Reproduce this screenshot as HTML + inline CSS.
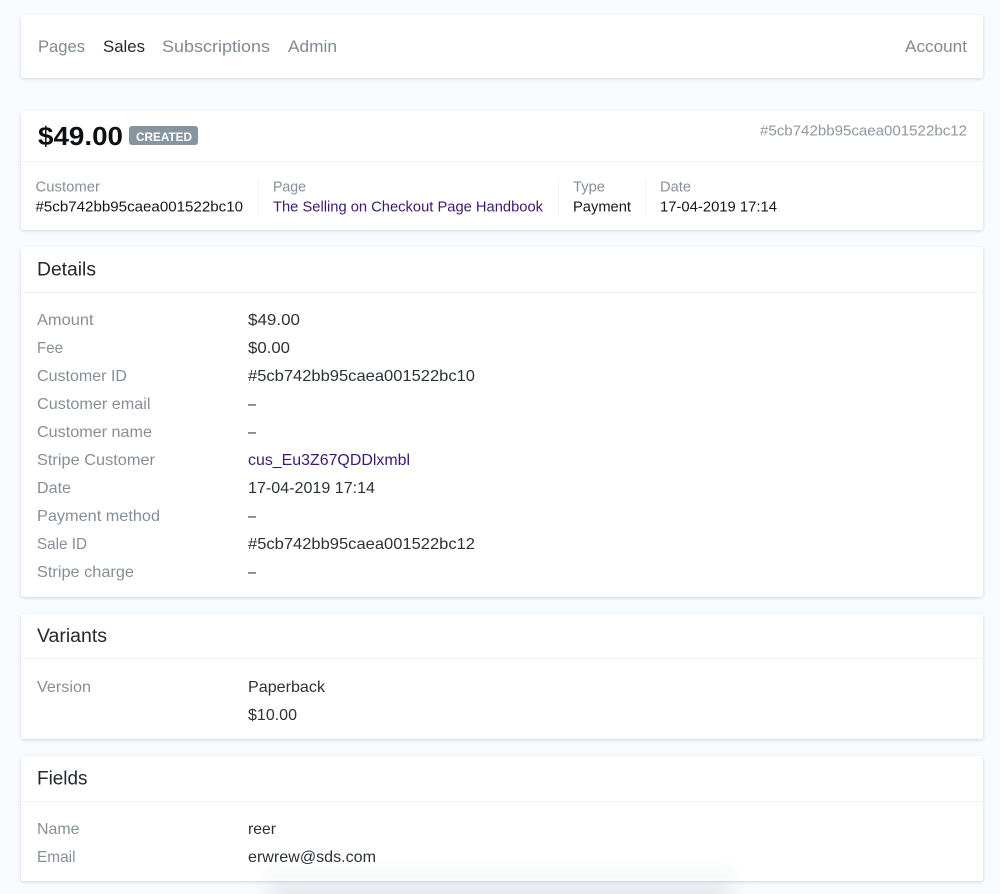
<!DOCTYPE html>
<html lang="en">
<head>
<meta charset="utf-8">
<title>Sale</title>
<style>
html,body{margin:0;padding:0;background:#f8fbfe;width:1000px;height:894px;overflow:hidden;}
#wrap{width:1000px;height:894px;position:relative;overflow:hidden;font-family:"Liberation Sans",sans-serif;}
.card{position:absolute;left:21px;width:962px;background:#fff;border-radius:3px;box-shadow:0 1px 3px rgba(40,60,80,.2);}
.hr{position:absolute;left:21px;width:962px;height:1px;background:#f1f3f5;}
.vr{position:absolute;top:178px;width:1px;height:38px;background:#f2f4f6;}
.badge{position:absolute;left:129px;top:126px;width:69px;height:19px;border-radius:3px;background:#8795a1;}
.glow{position:absolute;left:270px;top:880px;width:460px;height:40px;background:#e4e9ed;filter:blur(10px);}
.fade{position:absolute;left:265px;top:860px;width:470px;height:21px;background:linear-gradient(rgba(238,241,244,0),rgba(238,241,244,.6));filter:blur(4px);}
.clip{position:absolute;left:21px;top:756px;width:962px;height:125px;overflow:hidden;border-radius:3px;}
svg{position:absolute;left:0;top:0;}
text{font-family:"Liberation Sans",sans-serif;font-size:16px;}
.nav{font-size:17px;fill:#7f8a94;}
.l{fill:#868f98;}
.v{fill:#2b3238;}
.a{fill:#3d1a70;}
.t{font-size:19px;fill:#22292f;}
.s{font-size:14.5px;}
</style>
</head>
<body>
<div id="wrap">
<div class="glow"></div>
<div class="card" style="top:15px;height:63px"></div>
<div class="card" style="top:111px;height:119px"></div>
<div class="card" style="top:247px;height:350px"></div>
<div class="card" style="top:614px;height:125px"></div>
<div class="card" style="top:756px;height:125px"></div>
<div class="clip"><div class="fade" style="left:244px;top:104px"></div></div>
<div class="hr" style="top:161px"></div>
<div class="hr" style="top:292px"></div>
<div class="hr" style="top:658px"></div>
<div class="hr" style="top:801px"></div>
<div class="vr" style="left:258px"></div>
<div class="vr" style="left:558px"></div>
<div class="vr" style="left:645px"></div>
<div class="badge"></div>
<svg width="1000" height="894" viewBox="0 0 1000 894" xmlns="http://www.w3.org/2000/svg">
<text class="nav" x="38" y="52" textLength="47" lengthAdjust="spacingAndGlyphs">Pages</text>
<text class="nav" x="103" y="52" textLength="42" lengthAdjust="spacingAndGlyphs" style="fill:#22292f">Sales</text>
<text class="nav" x="162" y="52" textLength="108" lengthAdjust="spacingAndGlyphs">Subscriptions</text>
<text class="nav" x="288" y="52" textLength="49" lengthAdjust="spacingAndGlyphs">Admin</text>
<text class="nav" x="905" y="52" textLength="62" lengthAdjust="spacingAndGlyphs">Account</text>

<text x="38" y="145" textLength="85" lengthAdjust="spacingAndGlyphs" style="font-size:26px;font-weight:bold;fill:#0d1013">$49.00</text>
<text x="136" y="141" textLength="56" lengthAdjust="spacingAndGlyphs" style="font-size:12px;font-weight:bold;fill:#fff">CREATED</text>
<text x="760" y="135.5" textLength="207" lengthAdjust="spacingAndGlyphs" style="font-size:15px;fill:#8f98a1">#5cb742bb95caea001522bc12</text>

<text class="s l" x="35.5" y="191.5" textLength="64.5" lengthAdjust="spacingAndGlyphs">Customer</text>
<text class="s" x="35.5" y="211.5" textLength="207.5" lengthAdjust="spacingAndGlyphs" style="fill:#14181c">#5cb742bb95caea001522bc10</text>
<text class="s l" x="273" y="191.5" textLength="33" lengthAdjust="spacingAndGlyphs">Page</text>
<text class="s a" x="273" y="211.5" textLength="270" lengthAdjust="spacingAndGlyphs">The Selling on Checkout Page Handbook</text>
<text class="s l" x="573" y="191.5" textLength="32" lengthAdjust="spacingAndGlyphs">Type</text>
<text class="s" x="573" y="211.5" textLength="58" lengthAdjust="spacingAndGlyphs" style="fill:#14181c">Payment</text>
<text class="s l" x="660" y="191.5" textLength="31" lengthAdjust="spacingAndGlyphs">Date</text>
<text class="s" x="660" y="211.5" textLength="117" lengthAdjust="spacingAndGlyphs" style="fill:#14181c">17-04-2019 17:14</text>

<text class="t" x="37" y="275.5" textLength="59" lengthAdjust="spacingAndGlyphs">Details</text>
<text class="l" x="37" y="325" textLength="56.5" lengthAdjust="spacingAndGlyphs">Amount</text>
<text class="v" x="248" y="325" textLength="52" lengthAdjust="spacingAndGlyphs">$49.00</text>
<text class="l" x="37" y="353" textLength="26" lengthAdjust="spacingAndGlyphs">Fee</text>
<text class="v" x="248" y="353" textLength="42" lengthAdjust="spacingAndGlyphs">$0.00</text>
<text class="l" x="37" y="381" textLength="90" lengthAdjust="spacingAndGlyphs">Customer ID</text>
<text class="v" x="248" y="381" textLength="227" lengthAdjust="spacingAndGlyphs">#5cb742bb95caea001522bc10</text>
<text class="l" x="37" y="409" textLength="113.5" lengthAdjust="spacingAndGlyphs">Customer email</text>
<text class="v" x="248" y="409" textLength="8" lengthAdjust="spacingAndGlyphs">–</text>
<text class="l" x="37" y="437" textLength="115" lengthAdjust="spacingAndGlyphs">Customer name</text>
<text class="v" x="248" y="437" textLength="8" lengthAdjust="spacingAndGlyphs">–</text>
<text class="l" x="37" y="465" textLength="118" lengthAdjust="spacingAndGlyphs">Stripe Customer</text>
<text class="a" x="248" y="465" textLength="162" lengthAdjust="spacingAndGlyphs">cus_Eu3Z67QDDlxmbl</text>
<text class="l" x="37" y="493" textLength="34" lengthAdjust="spacingAndGlyphs">Date</text>
<text class="v" x="248" y="493" textLength="127" lengthAdjust="spacingAndGlyphs">17-04-2019 17:14</text>
<text class="l" x="37" y="521" textLength="123" lengthAdjust="spacingAndGlyphs">Payment method</text>
<text class="v" x="248" y="521" textLength="8" lengthAdjust="spacingAndGlyphs">–</text>
<text class="l" x="37" y="549" textLength="50" lengthAdjust="spacingAndGlyphs">Sale ID</text>
<text class="v" x="248" y="549" textLength="227" lengthAdjust="spacingAndGlyphs">#5cb742bb95caea001522bc12</text>
<text class="l" x="37" y="577" textLength="97" lengthAdjust="spacingAndGlyphs">Stripe charge</text>
<text class="v" x="248" y="577" textLength="8" lengthAdjust="spacingAndGlyphs">–</text>

<text class="t" x="37" y="642" textLength="70" lengthAdjust="spacingAndGlyphs">Variants</text>
<text class="l" x="37" y="692" textLength="54" lengthAdjust="spacingAndGlyphs">Version</text>
<text class="v" x="248" y="692" textLength="77" lengthAdjust="spacingAndGlyphs">Paperback</text>
<text class="v" x="248" y="720" textLength="49" lengthAdjust="spacingAndGlyphs">$10.00</text>

<text class="t" x="37" y="784.5" textLength="50.5" lengthAdjust="spacingAndGlyphs">Fields</text>
<text class="l" x="37" y="834" textLength="42.5" lengthAdjust="spacingAndGlyphs">Name</text>
<text class="v" x="248" y="834" textLength="28" lengthAdjust="spacingAndGlyphs">reer</text>
<text class="l" x="37" y="862" textLength="38.5" lengthAdjust="spacingAndGlyphs">Email</text>
<text class="v" x="248" y="862" textLength="128" lengthAdjust="spacingAndGlyphs">erwrew@sds.com</text>
</svg>
</div>
</body>
</html>
